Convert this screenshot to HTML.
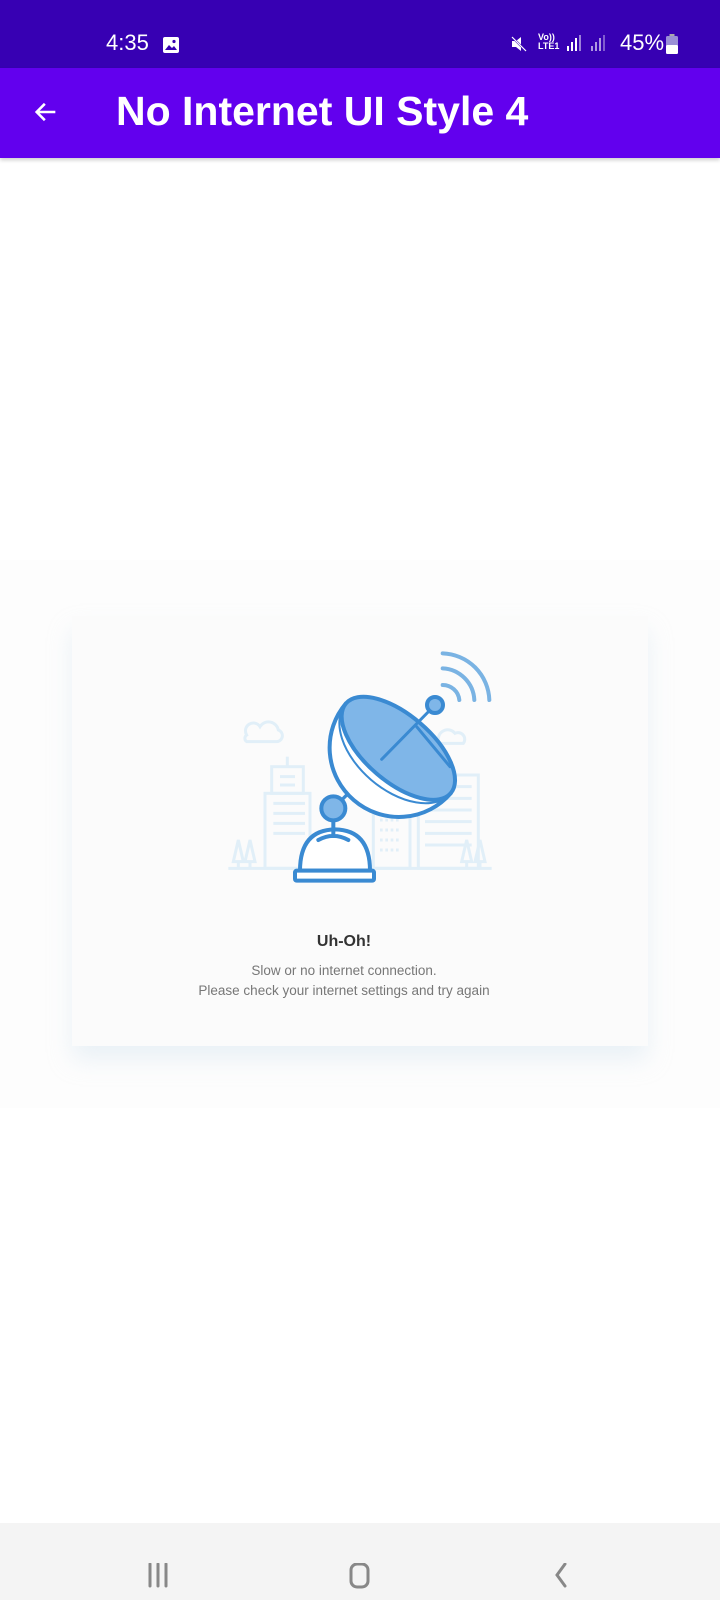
<!DOCTYPE html>
<html><head><meta charset="utf-8"><style>
*{margin:0;padding:0;box-sizing:border-box}
body{width:720px;height:1600px;background:#fff;position:relative;overflow:hidden;font-family:"Liberation Sans",sans-serif}
.sb{position:absolute;left:0;top:0;width:720px;height:68px;background:#3700b3;color:#fff}
.ab{position:absolute;left:0;top:68px;width:720px;height:90px;background:#6200ee;box-shadow:0 2px 4px rgba(0,0,0,.2)}
.gif{position:absolute;left:0;top:560px;width:720px;height:548px;background:#fdfdfd}
.card{position:absolute;left:72px;top:616px;width:576px;height:430px;background:#fbfbfb;box-shadow:0 14px 22px rgba(200,220,235,.35)}
.t{position:absolute;width:544px;left:0;text-align:center;color:#777;font-size:13.5px}
.nav{position:absolute;left:0;top:1523px;width:720px;height:77px;background:#f4f4f4}
</style></head><body>
<div class="sb">
<div style="position:absolute;left:106px;top:30px;font-size:22px">4:35</div>
<svg style="position:absolute;left:162px;top:36px" width="18" height="18" viewBox="0 0 18 18"><rect x="1" y="1" width="16" height="16" rx="2" fill="#fff"/><path d="M3 14l4-5 3 3 2-2 3 4z" fill="#3700b3"/><circle cx="12" cy="5.5" r="1.6" fill="#3700b3"/></svg>
<svg style="position:absolute;left:510px;top:34px" width="20" height="20" viewBox="0 0 20 20"><path d="M2 7h4l5-4v14l-5-4H2z" fill="#fff"/><path d="M2 3l14 14" stroke="#3700b3" stroke-width="2"/><path d="M2 3l14 14" stroke="#fff" stroke-width="1.2"/></svg>
<div style="position:absolute;left:538px;top:33px;font-size:9px;line-height:9px;font-weight:bold">Vo))<br>LTE1</div>
<svg style="position:absolute;left:566px;top:34px" width="50" height="18" viewBox="0 0 50 18"><g fill="#fff"><rect x="1" y="12" width="2" height="5"/><rect x="5" y="8" width="2" height="9"/><rect x="9" y="4" width="2" height="13"/><rect x="13" y="1" width="2" height="16" opacity=".5"/></g><g fill="#fff" opacity=".6"><rect x="25" y="12" width="2" height="5"/><rect x="29" y="8" width="2" height="9"/><rect x="33" y="4" width="2" height="13"/><rect x="37" y="1" width="2" height="16" opacity=".6"/></g></svg>
<div style="position:absolute;left:620px;top:30px;font-size:22px">45%</div>
<svg style="position:absolute;left:666px;top:34px" width="12" height="20" viewBox="0 0 12 20"><rect x="3.5" y="0" width="5" height="2" fill="#aaa"/><rect x="0" y="2" width="12" height="18" rx="1.5" fill="#9a8fd6"/><rect x="0" y="11" width="12" height="9" rx="1.5" fill="#fff"/></svg>
</div>
<div class="ab">
<svg style="position:absolute;left:32px;top:30px" width="28" height="28" viewBox="0 0 24 24"><path d="M20 12H5M11 5l-7 7 7 7" stroke="#fff" stroke-width="2.2" fill="none"/></svg>
<div style="position:absolute;left:116px;top:20px;font-size:41px;color:#fff;font-weight:bold">No Internet UI Style 4</div>
</div>
<div class="gif"></div>
<div class="card">
<div class="t" style="top:317px;font-size:16px;font-weight:bold;color:#333">Uh-Oh!</div>
<div class="t" style="top:347px">Slow or no internet connection.</div>
<div class="t" style="top:367px">Please check your internet settings and try again</div>
</div>
<svg style="position:absolute;left:200px;top:620px" width="320" height="280" viewBox="0 0 960 840">
<g stroke="#e1eff8" stroke-width="9" fill="none">
<path d="M140 345a22 22 0 0 1 40-25a30 30 0 0 1 55 10a18 18 0 0 1-5 35h-90a12 12 0 0 1 0-20z"/>
<path d="M715 355a28 28 0 0 1 50-15a20 20 0 0 1 25 30h-75z"/>
<rect x="215" y="440" width="95" height="80"/><rect x="195" y="520" width="135" height="225"/>
<path d="M262 440v-30"/><path d="M240 470h45M240 495h45M220 550h95M220 580h95M220 610h95M220 640h95"/>
<rect x="655" y="465" width="180" height="280"/><path d="M675 500h140M675 535h140M675 570h140M675 605h140M675 640h140M675 675h140"/>
<rect x="520" y="570" width="110" height="175"/><path d="M540 600h60M540 630h60M540 660h60M540 690h60" stroke-dasharray="8 8"/>
<path d="M85 745h790"/>
<path d="M115 660l-15 65h30zM115 725v20M150 660l-15 65h30zM150 725v20M800 660l-15 65h30zM800 725v20M840 660l-15 65h30zM840 725v20"/>
</g>
<g stroke="#7ab3e3" stroke-width="12" fill="none" stroke-linecap="round">
<path d="M728 195a50 50 0 0 1 50 45"/><path d="M728 145a100 100 0 0 1 95 95"/><path d="M728 100a145 145 0 0 1 140 140"/>
</g>
<g stroke="#3a8ad2" stroke-width="12" stroke-linecap="round" stroke-linejoin="round">
<path d="M400 565L450 515" stroke-width="10"/>
<path d="M300 752Q300 630 405 628Q510 630 510 752Z" fill="#fff"/>
<rect x="285" y="752" width="237" height="30" rx="5" fill="#fff"/>
<path d="M400 600v48M355 660q45-25 90 0" fill="none"/>
<circle cx="400" cy="565" r="36" fill="#7fb6e8"/>
<path d="M438 250A207 205 40.6 0 0 752 520Z" fill="#fff"/>
<path d="M438 250A207 125 40.6 0 0 752 520" fill="none" stroke-width="6" stroke="#3a8ad2"/>
<ellipse cx="595" cy="385" rx="207" ry="100" transform="rotate(40.6 595 385)" fill="#7fb6e8"/>
<path d="M545 418L705 255M650 320L750 440" fill="none" stroke-width="9"/>
<circle cx="705" cy="255" r="24" fill="#7fb6e8"/>
</g>
</svg>
<div class="nav">
<svg style="position:absolute;left:148px;top:40px" width="430" height="30" viewBox="0 0 430 30"><g stroke="#888" stroke-width="3" fill="none" stroke-linecap="round"><path d="M2 1v22M10 1v22M18 1v22"/><rect x="203" y="1" width="17" height="23" rx="6"/><path d="M417 1l-8 11 8 11"/></g></svg>
</div>
</body></html>
